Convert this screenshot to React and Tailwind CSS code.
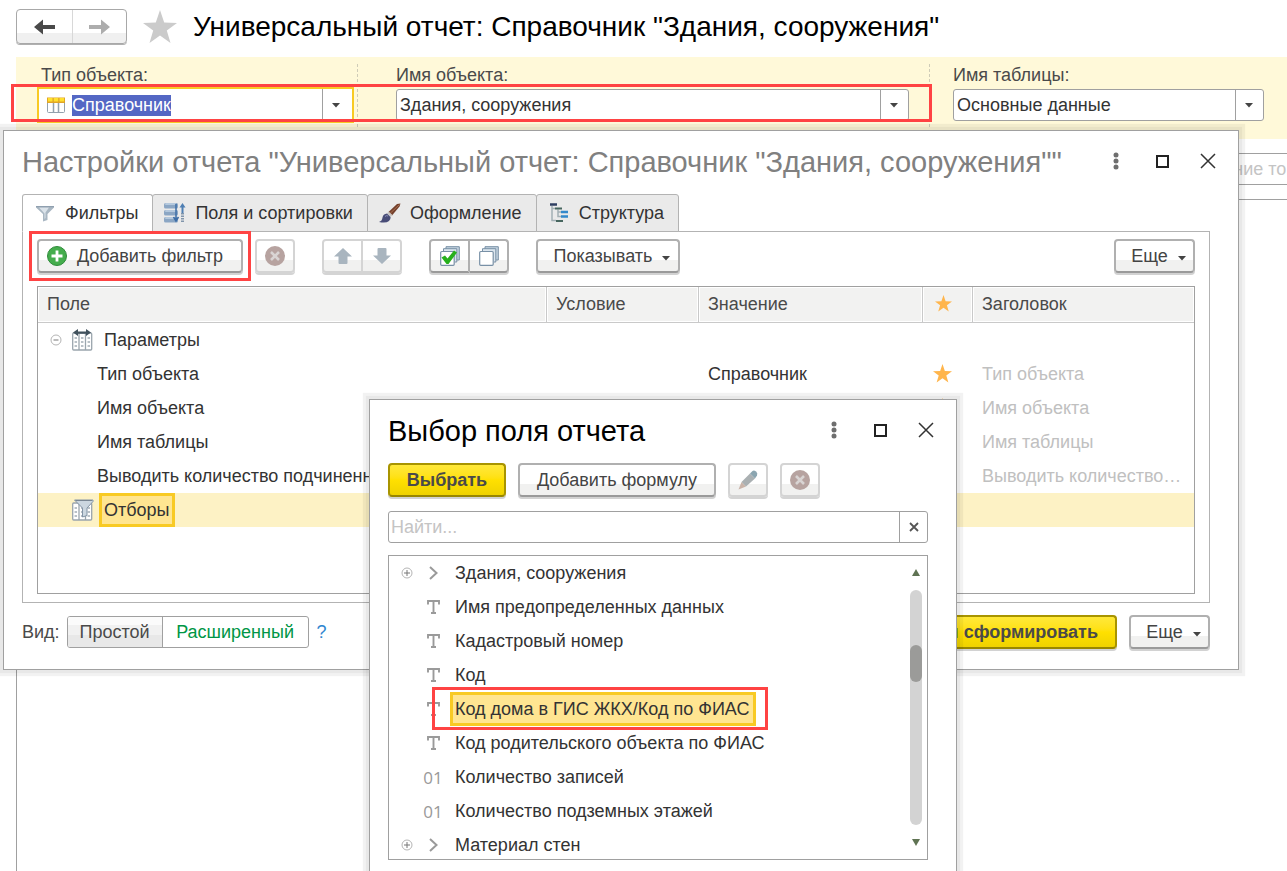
import { useState } from 'react';
import clsx from 'clsx';

const FIELDS = [
  { icon: 'group', title: 'Здания, сооружения' },
  { icon: 'text', title: 'Имя предопределенных данных' },
  { icon: 'text', title: 'Кадастровый номер' },
  { icon: 'text', title: 'Код' },
  { icon: 'text', title: 'Код дома в ГИС ЖКХ/Код по ФИАС' },
  { icon: 'text', title: 'Код родительского объекта по ФИАС' },
  { icon: 'number', title: 'Количество записей' },
  { icon: 'number', title: 'Количество подземных этажей' },
  { icon: 'group', title: 'Материал стен' },
];

const PARAMS = [
  { name: 'Тип объекта', value: 'Справочник', caption: 'Тип объекта' },
  { name: 'Имя объекта', value: '', caption: 'Имя объекта' },
  { name: 'Имя таблицы', value: '', caption: 'Имя таблицы' },
  { name: 'Выводить количество подчиненных', value: '', caption: 'Выводить количество…' },
];

/* Icons */
function Caret({ className }) {
  return (
    <svg width="8" height="5" viewBox="0 0 8 5" className={clsx('shrink-0', className)}><path d="M0 0h8L4 4.600z" fill="#444" /></svg>
  );
}

function Star({ size, color }) {
  return (
    <svg width={size} height={size} viewBox="0 0 34 34" className="shrink-0">
      <path d="M17 0l4.200 12.400L34 12.900 23.800 20.600 27.500 33 17 25.600 6.500 33l3.700-12.400L0 12.900l12.800-.5z" fill={color} />
    </svg>
  );
}

function TableIcon() {
  return (
    <svg width="18" height="16" viewBox="0 0 18 16" className="shrink-0">
      <path d="M.5 5.500v9q0 1 1 1h15q1 0 1-1v-9z" fill="#fff" stroke="#93a1ad" />
      <path d="M6.500 5v10.500M11.500 5v10.500" stroke="#93a1ad" strokeWidth="1.500" />
      <path d="M0 .5h18V6H0z" fill="#e0a527" />
      <path d="M1 1h4.500v3.500H1zM6.800 1h4.400v3.500H6.800zM12.500 1H17v3.500h-4.500z" fill="#ffe02e" />
    </svg>
  );
}

function FunnelIcon() {
  return (
    <svg width="18" height="17" viewBox="0 0 18 17">
      <path d="M0 1h18v1.500L11.500 9v6L7 16.500V9L0 2.500z" fill="#a9b7c3" />
      <path d="M3 2.500h10L9.500 7.500v5.500L8.500 14V8.500z" fill="#dbe3ea" />
      <path d="M0 1h18v1.200H0z" fill="#8f9faf" />
    </svg>
  );
}

function SortIcon() {
  return (
    <svg width="22" height="20" viewBox="0 0 22 20">
      {[0, 7, 14].map((y) => (
        <g key={y}>
          <rect x="0" y={y} width="14" height="5.500" rx="1.500" fill="#8ba6c4" />
          <rect x="1" y={y} width="11" height="2" rx="1" fill="#b4c8dd" />
        </g>
      ))}
      <path d="M12 1v16M9.500 14l2.500 4 2.500-4" fill="none" stroke="#3d6da6" strokeWidth="1.500" />
      <path d="M18.500 10V2" stroke="#4f7fb3" strokeWidth="2" />
      <path d="M15.500 4.500L18.500 0l3 4.500z" fill="#4f7fb3" />
      <path d="M18.500 10v9.500" stroke="#8195ab" strokeWidth="3" strokeDasharray="1.500 1" />
    </svg>
  );
}

function BrushIcon() {
  return (
    <svg width="22" height="20" viewBox="0 0 22 20">
      <path d="M21.500 0.500L18 1 9.500 9l3.500 3.500 7.500-9z" fill="#74402c" />
      <path d="M20.500 1.500L11 10.500" stroke="#a86f50" />
      <path d="M9.500 8.500L8 10.500l3.500 3.500 2-2z" fill="#c9c6c4" />
      <path d="M8 10.500q-4 .5-4.500 4-.3 3.500-3.500 4.500 7 1.500 10-1 2-2 1.500-4z" fill="#484c77" />
      <path d="M6 13.500q1.500-1.500 3-.5" stroke="#8a8eb8" fill="none" />
    </svg>
  );
}

function StructureIcon() {
  return (
    <svg width="20" height="20" viewBox="0 0 20 20">
      <path d="M1 1.500h7" stroke="#2f3f62" strokeWidth="2.500" />
      <path d="M3 3v14.500h4M3 5.500h3M9 6.500v7h4M9 9h4" fill="none" stroke="#a3b0b5" strokeWidth="1.500" />
      <path d="M6 5.500h7" stroke="#47665f" strokeWidth="2" />
      <path d="M12 9h7M12 13.500h7" stroke="#3489cb" strokeWidth="2.500" />
      <path d="M7 18h7" stroke="#47665f" strokeWidth="2" />
    </svg>
  );
}

function AddIcon() {
  return (
    <svg width="20" height="20" viewBox="0 0 20 20">
      <circle cx="10" cy="10" r="9.500" fill="#45ad4d" stroke="#2f8c3b" />
      <path d="M10 4.500v11M4.500 10h11" stroke="#fff" strokeWidth="2.800" />
    </svg>
  );
}

function DeleteIcon() {
  return (
    <svg width="20" height="20" viewBox="0 0 20 20">
      <circle cx="10" cy="10" r="10" fill="#b7a3a0" />
      <path d="M6 6l8 8M14 6l-8 8" stroke="#d9d4d3" strokeWidth="2.600" />
    </svg>
  );
}

function ArrowUpIcon({ down }) {
  return (
    <svg width="18" height="16" viewBox="0 0 18 16" className={down ? 'rotate-180' : ''}>
      <path d="M9 0l9 8.500h-4.500V15q0 1-1 1h-7q-1 0-1-1V8.500H0z" fill="#a9b5bf" />
    </svg>
  );
}

function SheetsIcon({ checked }) {
  return (
    <svg width="20" height="20" viewBox="0 0 20 20">
      <path d="M6 4V.7h13.300v13.300H17" fill="#c4d3e0" stroke="#7890a6" />
      <path d="M3.500 6V2.700h13.300v13.300H15" fill="#dbe5ee" stroke="#7890a6" />
      <rect x=".7" y="5.500" width="13.500" height="13.800" rx="1" fill="#fff" stroke="#7890a6" strokeWidth="1.200" />
      {checked && <path d="M1.500 11.500L5 9.500l2.500 3L14 4.500l3 2L8.500 18H6.500z" fill="#27b01c" />}
    </svg>
  );
}

function PencilIcon() {
  return (
    <svg width="20" height="20" viewBox="0 0 20 20">
      <path d="M.5 19.500L3.500 12l4.500 4.500z" fill="#c9b3a8" />
      <path d="M3.500 12L12 3.500l5 5L8 16.500z" fill="#aab0b2" />
      <path d="M12 3.500l2.500-2.500q1.500-1 3.500.5t1 4L17 8.500z" fill="#8ba5b0" />
    </svg>
  );
}

function ColumnsIcon({ filter }) {
  return (
    <svg width="22" height="22" viewBox="0 0 22 22" className="shrink-0">
      <rect x=".7" y="4" width="19" height="17" rx="1" fill="#fff" stroke="#9aa5ad" strokeWidth="1.300" />
      <path d="M7 4v17M13.500 4v17" stroke="#9aa5ad" strokeWidth="1.300" />
      <path d="M3.800 8v11M10.200 8v11M16.800 8v11" stroke="#b9c1c7" strokeWidth="2.500" strokeDasharray="2 2" />
      {filter ? (
        <>
          <path d="M2.500 1H21v1.500L15 9v7.500L10.500 18V9z" fill="#ccd7e0" stroke="#8394a6" />
          <path d="M3.500 1.500H20" stroke="#7a8794" />
        </>
      ) : (
        <path d="M1 3.500L6 0v2.500h8V0l5 3.500L14 7V4.800H6V7z" fill="#41525d" />
      )}
    </svg>
  );
}

function ToggleIcon({ minus }) {
  return (
    <svg width="12" height="12" viewBox="0 0 12 12" className="shrink-0">
      <circle cx="6" cy="6" r="5" fill="#fff" stroke="#b5b5b5" />
      <path d={minus ? 'M3.500 6h5' : 'M3 6h6M6 3v6'} stroke="#777" />
    </svg>
  );
}

function FieldIcon({ type }) {
  if (type === 'group') {
    return <svg width="9" height="14" viewBox="0 0 9 14"><path d="M1 1l6.500 6L1 13" fill="none" stroke="#9a9a9a" strokeWidth="2" /></svg>;
  }
  if (type === 'text') {
    return (
      <svg width="13" height="14" viewBox="0 0 13 14">
        <path d="M1 4.500V1h11v3.500M6.500 1v12M4 13h5" fill="none" stroke="#9a9a9a" strokeWidth="1.900" />
      </svg>
    );
  }
  return <span className="font-['Open_Sans',sans-serif] text-[17px] leading-none text-[#999]">01</span>;
}

/* Controls */
function Button({ primary, disabled, className, children, ...rest }) {
  return (
    <button
      type="button"
      disabled={disabled}
      className={clsx(
        'flex h-[34px] shrink-0 items-center justify-center rounded border-2 whitespace-nowrap',
        primary && 'border-[#a89400] border-b-[#988600] bg-linear-to-b from-[#ffe838] via-[#ffe000] to-[#efd200] font-bold text-[#4a4a4a] shadow-[0_2px_0_#d2d2d2]',
        !primary && 'bg-[linear-gradient(#fff_62%,#f1f1f0_63%)] text-[#444]',
        !primary && !disabled && 'border-[#b0b0b0] border-b-[#9a9a9a] shadow-[0_2px_0_#d2d2d2]',
        disabled && 'border-[#d4d4d4] shadow-[0_2px_0_#d4d4d4]',
        className
      )}
      {...rest}
    >
      {children}
    </button>
  );
}

function Combo({ id, label, value, active }) {
  return (
    <div>
      <label htmlFor={id} className={clsx('block leading-[22px] text-[#4a4a4a]', active && 'pl-0.5')}>{label}</label>
      <div className={clsx('mt-[3px] flex h-8 items-center bg-white', active ? 'pl-2 ring-2 ring-[#f8ca24]' : 'rounded-[3px] border border-[#a0a0a0]')}>
        {active && <TableIcon />}
        <div className="min-w-0 flex-1">
          <select
            id={id}
            defaultValue={value}
            className={clsx('appearance-none leading-[21px] outline-none', active ? 'ml-[7px] field-sizing-content bg-[#5467c4] text-white' : 'w-full pl-[3px] text-[#333]')}
          >
            <option>{value}</option>
          </select>
        </div>
        <span className={clsx('flex h-full items-center border-l border-[#a0a0a0] pl-[9px]', active ? 'w-[30px]' : 'w-7')}><Caret /></span>
      </div>
    </div>
  );
}

function TitleBar({ title, className }) {
  return (
    <div className="flex h-[63px] items-center pr-[7px] pb-[3px] pl-[18px]">
      <h2 className={clsx('min-w-0 flex-1 truncate pt-0.5 text-[29px] leading-9', className)}>{title}</h2>
      <button type="button" aria-label="Еще" className="flex w-[46px] justify-center">
        <svg width="6" height="18" viewBox="0 0 6 18" fill="#6e6e6e"><circle cx="3" cy="3" r="2.500" /><circle cx="3" cy="9" r="2.500" /><circle cx="3" cy="15" r="2.500" /></svg>
      </button>
      <button type="button" aria-label="Развернуть" className="flex w-[46px] justify-center">
        <svg width="13" height="13" viewBox="0 0 13 13"><rect x="1" y="1" width="11" height="11" fill="none" stroke="#222" strokeWidth="2" /></svg>
      </button>
      <button type="button" aria-label="Закрыть" className="flex w-[46px] justify-center">
        <svg width="16" height="16" viewBox="0 0 16 16"><path d="M1 1l14 14M15 1L1 15" stroke="#333" strokeWidth="1.500" /></svg>
      </button>
    </div>
  );
}

function Marker({ className }) {
  return <div className={clsx('pointer-events-none absolute border-3 border-[#ff4343]', className)} />;
}

const WINDOW = 'absolute border border-[#a0a0a0] bg-white shadow-[0_0_1px_3px_rgba(0,0,0,0.04),0_0_1px_6px_rgba(0,0,0,0.05)]';

const TABS = [
  { title: 'Фильтры', Icon: FunnelIcon },
  { title: 'Поля и сортировки', Icon: SortIcon },
  { title: 'Оформление', Icon: BrushIcon },
  { title: 'Структура', Icon: StructureIcon },
];

function FilterTable() {
  const th = 'border-b border-[#c9c9c9] pb-0.5 pl-[9px] text-left font-normal shadow-[inset_0_0_0_1px_#fff]';
  return (
    <div className="mt-[13px] h-[308px] border border-[#a0a0a0]">
      <table className="w-full table-fixed border-separate border-spacing-0 text-[#333]">
        <colgroup>
          <col />
          <col className="w-[152px]" />
          <col className="w-[224px]" />
          <col className="w-[50px]" />
          <col className="w-[222px]" />
        </colgroup>
        <thead>
          <tr className="h-9 bg-[#f2f2f1] text-[#4a4a4a]">
            <th className={th}>Поле</th>
            <th className={clsx(th, 'border-l')}>Условие</th>
            <th className={clsx(th, 'border-l')}>Значение</th>
            <th className={clsx(th, 'border-l')} aria-label="Избранное">
              <div className="flex pl-[3px]"><Star size={17} color="#ffb54c" /></div>
            </th>
            <th className={clsx(th, 'border-l')}>Заголовок</th>
          </tr>
        </thead>
        <tbody>
          <tr className="h-[34px]">
            <td colSpan={5}>
              <div className="flex items-center gap-[10px] pl-3">
                <ToggleIcon minus />
                <ColumnsIcon />
                <span>Параметры</span>
              </div>
            </td>
          </tr>
          {PARAMS.map((p) => (
            <tr key={p.name} className="h-[34px]">
              <td className="pl-[59px] whitespace-nowrap">{p.name}</td>
              <td />
              <td className="pl-[10px]">{p.value}</td>
              <td className="pb-0.5 pl-[11px]"><Star size={19} color="#ffb54c" /></td>
              <td className="pl-[10px] whitespace-nowrap text-[#c0c0c0]">{p.caption}</td>
            </tr>
          ))}
          <tr className="h-[34px] bg-[#fdf2c5]">
            <td colSpan={5}>
              <div className="flex items-center pl-[34px]">
                <ColumnsIcon filter />
                <span className="ml-[5px] h-[34px] border-3 border-[#f8ca24] bg-[#ffe591] px-0.5 leading-7">Отборы</span>
              </div>
            </td>
          </tr>
        </tbody>
      </table>
    </div>
  );
}

function SettingsWindow() {
  const [tab, setTab] = useState(0);

  return (
    <section className={clsx(WINDOW, 'top-[130px] right-12 left-[3px]')}>
      <TitleBar title={'Настройки отчета "Универсальный отчет: Справочник "Здания, сооружения""'} className="text-[#808080]" />
      <div className="pr-7 pb-5 pl-[18px]">
        <div className="flex" role="tablist">
          {TABS.map(({ title, Icon }, i) => (
            <button
              key={title}
              type="button"
              role="tab"
              aria-selected={tab === i}
              onClick={() => setTab(i)}
              className={clsx(
                'relative -mb-px flex h-[38px] items-center gap-[9px] rounded-t-[3px] border border-[#b3b3b3] pr-[14px] pl-[11px] whitespace-nowrap text-[#333]',
                i > 0 && '-ml-px',
                tab === i ? 'border-b-white bg-white' : 'bg-[#eaeaea]'
              )}
            >
              <span className="flex w-[22px] justify-center"><Icon /></span>
              {title}
            </button>
          ))}
        </div>

        <div className="border border-[#b3b3b3] px-[14px] pt-[7px] pb-2">
          <div className="flex">
            <div className="relative">
              <Button className="w-[206px] gap-[10px] pr-[10px]"><AddIcon />Добавить фильтр</Button>
              <Marker className="-top-2 -right-2 -bottom-2 -left-2" />
            </div>
            <Button disabled aria-label="Удалить" className="ml-3 w-10"><DeleteIcon /></Button>
            <div className="ml-[27px] flex">
              <Button disabled aria-label="Вверх" className="w-[41px] rounded-r-none"><ArrowUpIcon /></Button>
              <Button disabled aria-label="Вниз" className="w-[39px] rounded-l-none border-l-0"><ArrowUpIcon down /></Button>
            </div>
            <div className="ml-[27px] flex">
              <Button aria-label="Включить все" className="w-[41px] rounded-r-none"><SheetsIcon checked /></Button>
              <Button aria-label="Выключить все" className="w-[39px] rounded-l-none border-l-0"><SheetsIcon /></Button>
            </div>
            <Button className="ml-[27px] w-36 gap-[10px] pl-2">Показывать<Caret className="mt-1" /></Button>
            <span className="flex-1" />
            <Button className="w-[81px] gap-[10px] pl-2">Еще<Caret className="mt-1" /></Button>
          </div>
          <FilterTable />
        </div>

        <div className="mt-3 flex items-center">
          <span className="text-[#4a4a4a]">Вид:</span>
          <div className="ml-[7px] flex h-8 overflow-hidden rounded-[3px] border border-[#a0a0a0]">
            <button type="button" className="w-[95px] border-r border-[#a0a0a0] bg-[linear-gradient(#fbfbfb_25%,#f1f1f1_26%,#f1f1f1_60%,#e8e8e8_61%)] text-[#4a4a4a]">Простой</button>
            <button type="button" className="w-[145px] text-[#009646]">Расширенный</button>
          </div>
          <a href="#help" className="ml-2 text-[#2f86d0]">?</a>
          <span className="flex-1" />
          <Button primary className="px-[17px]">Закрыть и сформировать</Button>
          <Button className="ml-3 w-[81px] gap-[10px] pl-2">Еще<Caret className="mt-1" /></Button>
        </div>
      </div>
    </section>
  );
}

function FieldPickerWindow() {
  const [selected, setSelected] = useState(4);

  return (
    <section className={clsx(WINDOW, 'top-[399px] left-[369px] w-[588px]')}>
      <TitleBar title="Выбор поля отчета" className="text-black" />
      <div className="pr-7 pb-8 pl-[18px]">
        <div className="flex gap-3">
          <Button primary className="w-[118px]">Выбрать</Button>
          <Button className="w-[198px]">Добавить формулу</Button>
          <Button disabled aria-label="Изменить" className="w-10"><PencilIcon /></Button>
          <Button disabled aria-label="Удалить" className="w-10"><DeleteIcon /></Button>
        </div>

        <div className="mt-[14px] flex h-8 rounded-[3px] border border-[#a0a0a0]">
          <input type="text" aria-label="Найти" placeholder="Найти..." className="min-w-0 flex-1 pl-0.5 outline-none placeholder:text-[#c4c4c4]" />
          <button type="button" aria-label="Очистить" className="flex w-7 items-center justify-center border-l border-[#a0a0a0]">
            <svg width="10" height="10" viewBox="0 0 10 10"><path d="M1 1l8 8M9 1L1 9" stroke="#555" strokeWidth="1.800" /></svg>
          </button>
        </div>

        <div className="mt-3 flex h-[305px] border border-[#a0a0a0]">
          <ul className="h-[303px] min-w-0 flex-1 overflow-clip text-[#333]">
            {FIELDS.map((f, i) => (
              <li key={f.title} className="flex h-[34px] items-center" onClick={() => setSelected(i)}>
                <span className="flex w-[35px] justify-center">{f.icon === 'group' && <ToggleIcon />}</span>
                <span className="flex w-[18px] justify-center"><FieldIcon type={f.icon} /></span>
                <span className="relative ml-2">
                  <span className={clsx('block h-[34px] border-3 pr-1 pl-0.5 leading-7 whitespace-nowrap', selected === i ? 'border-[#f8ca24] bg-[#ffe591]' : 'border-transparent')}>
                    {f.title}
                  </span>
                  {selected === i && <Marker className="-top-[5px] -right-3 -bottom-1 -left-[18px]" />}
                </span>
              </li>
            ))}
          </ul>
          <div className="flex w-[22px] flex-col items-center pt-[13px] pb-[13px]">
            <svg width="8" height="7" viewBox="0 0 8 7"><path d="M4 0l4 7H0z" fill="#5f7353" /></svg>
            <div className="mt-[14px] mb-[14px] w-3 flex-1 rounded-full bg-[#d3d3d3] pt-[55px]">
              <div className="h-[37px] rounded-full bg-[#9b9b99]" />
            </div>
            <svg width="8" height="7" viewBox="0 0 8 7"><path d="M4 7l4-7H0z" fill="#5f7353" /></svg>
          </div>
        </div>
      </div>
    </section>
  );
}

export default function App() {
  return (
    <div className="relative flex h-screen flex-col overflow-hidden bg-white font-['Liberation_Sans',Arial,sans-serif] text-lg leading-[22px]">
      {/* Header */}
      <header className="flex items-center pt-[9px] pb-[13px] pl-4">
        <div className="flex h-[35px] rounded border border-[#a8a8a8] bg-[linear-gradient(#fff_70%,#f0f0f0_71%)] shadow-[0_1px_0_#b0b0b0]">
          <button type="button" aria-label="Назад" className="flex w-14 items-center justify-center border-r border-[#d8d8d8]">
            <svg width="21" height="16" viewBox="0 0 21 16"><path d="M0 8L9 .5V6h12v4H9v5.500z" fill="#4a4a4a" /></svg>
          </button>
          <button type="button" aria-label="Вперед" className="flex w-[53px] items-center justify-center">
            <svg width="21" height="16" viewBox="0 0 21 16"><path d="M21 8L12 .5V6H0v4h12v5.500z" fill="#adadad" /></svg>
          </button>
        </div>
        <span className="ml-4"><Star size={34} color="#cbcbcb" /></span>
        <h1 className="ml-4 text-[28px] leading-[35px] whitespace-nowrap text-black">Универсальный отчет: Справочник "Здания, сооружения"</h1>
      </header>

      {/* Report parameters */}
      <div className="relative ml-4 grid grid-cols-[342fr_572fr_357fr] bg-[#fff9d9] pt-[7px] pb-3">
        <div className="border-r border-dashed border-[#cfccb8] pr-[5px] pb-[6px] pl-[23px]">
          <Combo id="object-type" label="Тип объекта:" value="Справочник" active />
        </div>
        <div className="border-r border-dashed border-[#cfccb8] pr-5 pb-[6px] pl-[38px]">
          <Combo id="object-name" label="Имя объекта:" value="Здания, сооружения" />
        </div>
        <div className="pr-[23px] pb-[6px] pl-[23px]">
          <Combo id="table-name" label="Имя таблицы:" value="Основные данные" />
        </div>
        <Marker className="top-[27px] right-[355px] -left-[5px] h-[38px]" />
      </div>

      {/* Report area */}
      <div className="mt-[14px] flex justify-end">
        <input type="text" aria-label="Поиск" placeholder="Содержание то" className="h-8 w-[129px] border-y border-[#a0a0a0] placeholder:text-[#c4c4c4]" />
      </div>
      <main className="mt-[14px] ml-4 flex-1 border-t border-l border-[#a0a0a0]" />

      <SettingsWindow />
      <FieldPickerWindow />
    </div>
  );
}
